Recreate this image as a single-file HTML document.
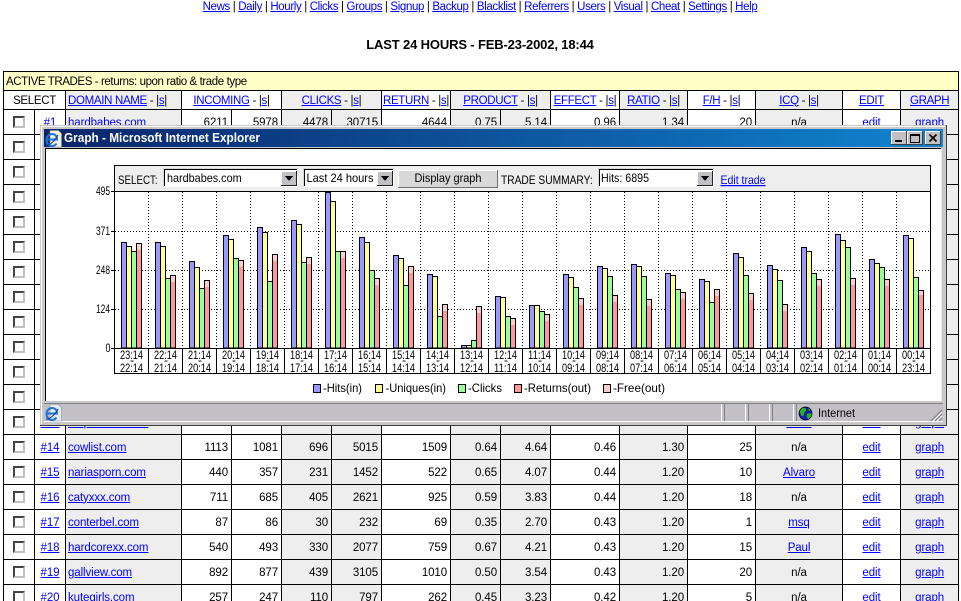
<!DOCTYPE html>
<html><head><meta charset="utf-8"><title>Stats</title>
<style>
html,body{margin:0;padding:0;background:#fff;width:961px;height:601px;overflow:hidden}
body{position:relative;font:11.5px "Liberation Sans",Arial,sans-serif;color:#000}
a{color:#00f;text-decoration:underline}
#nav{position:absolute;left:0;top:1px;width:960px;text-align:center;line-height:13px;letter-spacing:-.36px}
#ttl{position:absolute;left:0;top:37px;width:960px;text-align:center;font-weight:bold;font-size:13px;line-height:15px;letter-spacing:-.15px}
table{position:absolute;left:3px;top:71px;border-collapse:collapse;table-layout:fixed;width:956px}
td{border:1px solid #000;padding:2px 3px 0 0;height:24px;line-height:13px;white-space:nowrap;overflow:hidden;text-align:right;box-sizing:border-box;letter-spacing:-.1px}
tr.y td{background:#ffffc8;text-align:left;padding:2px 0 0 2px;height:19px;letter-spacing:-.4px}
tr.h td{height:19px;text-align:center;padding:2px 0 0;background:#fff;letter-spacing:-.32px}
tr.h td.g{background:#eee}
tr.h td.l{text-align:left;padding-left:2px}
tr.d td:nth-child(1),tr.d td:nth-child(2){text-align:center;padding:2px 0 0}
tr.d td:nth-child(1){padding:0}
tr.d td:nth-child(3){text-align:left;padding:2px 0 0 2px}
tr.d td:nth-child(3),tr.d td:nth-child(6),tr.d td:nth-child(7),tr.d td:nth-child(9),tr.d td:nth-child(10),tr.d td:nth-child(12),tr.d td:nth-child(14),tr.d td:nth-child(16){background:#eee}
tr.d td:nth-child(14),tr.d td:nth-child(15),tr.d td:nth-child(16){text-align:center;padding:2px 0 0}
tr.d td{height:25px}
i{display:block;width:12px;height:12px;margin:0 0 0 9px;box-sizing:border-box;background:#fff;border:2px solid;border-color:#444 #c0c0c0 #c0c0c0 #444}
#w{position:absolute;left:0;top:0}
#w text{font-family:"Liberation Sans",Arial,sans-serif;font-size:12px;fill:#000}
</style></head><body>
<div id="nav"><a href="#">News</a> | <a href="#">Daily</a> | <a href="#">Hourly</a> | <a href="#">Clicks</a> | <a href="#">Groups</a> | <a href="#">Signup</a> | <a href="#">Backup</a> | <a href="#">Blacklist</a> | <a href="#">Referrers</a> | <a href="#">Users</a> | <a href="#">Visual</a> | <a href="#">Cheat</a> | <a href="#">Settings</a> | <a href="#">Help</a></div>
<div id="ttl">LAST 24 HOURS - FEB-23-2002, 18:44</div>
<table>
<colgroup><col style="width:31px"><col style="width:31px"><col style="width:116px"><col style="width:50px"><col style="width:50px"><col style="width:50px"><col style="width:50px"><col style="width:69px"><col style="width:50px"><col style="width:50px"><col style="width:69px"><col style="width:68px"><col style="width:68px"><col style="width:87px"><col style="width:58px"><col style="width:58px"></colgroup>
<tr class="y"><td colspan="16">ACTIVE TRADES - returns: upon ratio &amp; trade type</td></tr>
<tr class="h"><td colspan="2">SELECT</td><td class="g l"><a href="#">DOMAIN NAME</a> - |<a href="#">s</a>|</td><td colspan="2"><a href="#">INCOMING</a> - |<a href="#">s</a>|</td><td colspan="2" class="g"><a href="#">CLICKS</a> - |<a href="#">s</a>|</td><td><a href="#">RETURN</a> - |<a href="#">s</a>|</td><td colspan="2" class="g"><a href="#">PRODUCT</a> - |<a href="#">s</a>|</td><td><a href="#">EFFECT</a> - |<a href="#">s</a>|</td><td class="g"><a href="#">RATIO</a> - |<a href="#">s</a>|</td><td><a href="#">F/H</a> - |<a href="#">s</a>|</td><td class="g"><a href="#">ICQ</a> - |<a href="#">s</a>|</td><td><a href="#">EDIT</a></td><td class="g"><a href="#">GRAPH</a></td></tr>
<tr class="d"><td><i></i></td><td><a href="#">#1</a></td><td><a href="#">hardbabes.com</a></td><td>6211</td><td>5978</td><td>4478</td><td>30715</td><td>4644</td><td>0.75</td><td>5.14</td><td>0.96</td><td>1.34</td><td>20</td><td>n/a</td><td><a href="#">edit</a></td><td><a href="#">graph</a></td></tr>
<tr class="d"><td><i></i></td><td></td><td></td><td></td><td></td><td></td><td></td><td></td><td></td><td></td><td></td><td></td><td></td><td></td><td></td><td></td></tr>
<tr class="d"><td><i></i></td><td></td><td></td><td></td><td></td><td></td><td></td><td></td><td></td><td></td><td></td><td></td><td></td><td></td><td></td><td></td></tr>
<tr class="d"><td><i></i></td><td></td><td></td><td></td><td></td><td></td><td></td><td></td><td></td><td></td><td></td><td></td><td></td><td></td><td></td><td></td></tr>
<tr class="d"><td><i></i></td><td></td><td></td><td></td><td></td><td></td><td></td><td></td><td></td><td></td><td></td><td></td><td></td><td></td><td></td><td></td></tr>
<tr class="d"><td><i></i></td><td></td><td></td><td></td><td></td><td></td><td></td><td></td><td></td><td></td><td></td><td></td><td></td><td></td><td></td><td></td></tr>
<tr class="d"><td><i></i></td><td></td><td></td><td></td><td></td><td></td><td></td><td></td><td></td><td></td><td></td><td></td><td></td><td></td><td></td><td></td></tr>
<tr class="d"><td><i></i></td><td></td><td></td><td></td><td></td><td></td><td></td><td></td><td></td><td></td><td></td><td></td><td></td><td></td><td></td><td></td></tr>
<tr class="d"><td><i></i></td><td></td><td></td><td></td><td></td><td></td><td></td><td></td><td></td><td></td><td></td><td></td><td></td><td></td><td></td><td></td></tr>
<tr class="d"><td><i></i></td><td></td><td></td><td></td><td></td><td></td><td></td><td></td><td></td><td></td><td></td><td></td><td></td><td></td><td></td><td></td></tr>
<tr class="d"><td><i></i></td><td></td><td></td><td></td><td></td><td></td><td></td><td></td><td></td><td></td><td></td><td></td><td></td><td></td><td></td><td></td></tr>
<tr class="d"><td><i></i></td><td></td><td></td><td></td><td></td><td></td><td></td><td></td><td></td><td></td><td></td><td></td><td></td><td></td><td></td><td></td></tr>
<tr class="d"><td><i></i></td><td><a href="#">#13</a></td><td><a href="#">hotpornsite.com</a></td><td>612</td><td>598</td><td>371</td><td>2410</td><td>803</td><td>0.62</td><td>4.02</td><td>0.47</td><td>1.30</td><td>12</td><td><a href="#">Mark</a></td><td><a href="#">edit</a></td><td><a href="#">graph</a></td></tr>
<tr class="d"><td><i></i></td><td><a href="#">#14</a></td><td><a href="#">cowlist.com</a></td><td>1113</td><td>1081</td><td>696</td><td>5015</td><td>1509</td><td>0.64</td><td>4.64</td><td>0.46</td><td>1.30</td><td>25</td><td>n/a</td><td><a href="#">edit</a></td><td><a href="#">graph</a></td></tr>
<tr class="d"><td><i></i></td><td><a href="#">#15</a></td><td><a href="#">nariasporn.com</a></td><td>440</td><td>357</td><td>231</td><td>1452</td><td>522</td><td>0.65</td><td>4.07</td><td>0.44</td><td>1.20</td><td>10</td><td><a href="#">Alvaro</a></td><td><a href="#">edit</a></td><td><a href="#">graph</a></td></tr>
<tr class="d"><td><i></i></td><td><a href="#">#16</a></td><td><a href="#">catyxxx.com</a></td><td>711</td><td>685</td><td>405</td><td>2621</td><td>925</td><td>0.59</td><td>3.83</td><td>0.44</td><td>1.20</td><td>18</td><td>n/a</td><td><a href="#">edit</a></td><td><a href="#">graph</a></td></tr>
<tr class="d"><td><i></i></td><td><a href="#">#17</a></td><td><a href="#">conterbel.com</a></td><td>87</td><td>86</td><td>30</td><td>232</td><td>69</td><td>0.35</td><td>2.70</td><td>0.43</td><td>1.20</td><td>1</td><td><a href="#">msq</a></td><td><a href="#">edit</a></td><td><a href="#">graph</a></td></tr>
<tr class="d"><td><i></i></td><td><a href="#">#18</a></td><td><a href="#">hardcorexx.com</a></td><td>540</td><td>493</td><td>330</td><td>2077</td><td>759</td><td>0.67</td><td>4.21</td><td>0.43</td><td>1.20</td><td>15</td><td><a href="#">Paul</a></td><td><a href="#">edit</a></td><td><a href="#">graph</a></td></tr>
<tr class="d"><td><i></i></td><td><a href="#">#19</a></td><td><a href="#">gallview.com</a></td><td>892</td><td>877</td><td>439</td><td>3105</td><td>1010</td><td>0.50</td><td>3.54</td><td>0.43</td><td>1.20</td><td>20</td><td>n/a</td><td><a href="#">edit</a></td><td><a href="#">graph</a></td></tr>
<tr class="d"><td><i></i></td><td><a href="#">#20</a></td><td><a href="#">kutegirls.com</a></td><td>257</td><td>247</td><td>110</td><td>797</td><td>262</td><td>0.45</td><td>3.23</td><td>0.42</td><td>1.20</td><td>5</td><td>n/a</td><td><a href="#">edit</a></td><td><a href="#">graph</a></td></tr>
</table>
<svg id="w" width="961" height="601" viewBox="0 0 961 601" xmlns="http://www.w3.org/2000/svg">
<defs><linearGradient id="tg" x1="0" x2="1" y1="0" y2="0"><stop offset="0" stop-color="#0a246a"/><stop offset="1" stop-color="#1084d0"/></linearGradient></defs>
<g shape-rendering="crispEdges">
<rect x="40" y="125" width="907" height="301" fill="#404040"/>
<rect x="40" y="125" width="906" height="300" fill="#c8c8c8"/>
<rect x="41" y="126" width="904" height="298" fill="#fff"/>
<rect x="42" y="127" width="903" height="297" fill="#c8c8c8"/>
<rect x="44" y="129" width="899" height="18" fill="url(#tg)"/>
<rect x="45" y="148" width="896" height="253" fill="#000"/>
<rect x="46" y="149" width="895" height="252" fill="#fff"/>
<rect x="941" y="149" width="1" height="252" fill="#e8e8e8"/>
<rect x="44" y="403" width="899" height="19" fill="#c3c0c5"/>
<rect x="44" y="403" width="899" height="1" fill="#808080"/>
<rect x="44" y="421" width="899" height="1" fill="#fff"/>
<path fill="#fff" d="M721 404h1v17h-1zM745 404h1v17h-1zM769 404h1v17h-1zM793 404h1v17h-1z"/>
<path fill="#808080" d="M724 404h1v17h-1zM748 404h1v17h-1zM772 404h1v17h-1zM796 404h1v17h-1z"/>
<rect x="891" y="131" width="16" height="14" fill="#404040"/><rect x="891" y="131" width="15" height="13" fill="#fff"/><rect x="892" y="132" width="14" height="12" fill="#c3c0c5"/>
<rect x="895" y="140" width="7" height="2" fill="#000"/>
<rect x="907" y="131" width="16" height="14" fill="#404040"/><rect x="907" y="131" width="15" height="13" fill="#fff"/><rect x="908" y="132" width="14" height="12" fill="#c3c0c5"/>
<path fill="none" stroke="#000" d="M910.5 134.5h9v8h-9z"/><rect x="910" y="134" width="10" height="2" fill="#000"/>
<rect x="925" y="131" width="16" height="14" fill="#404040"/><rect x="925" y="131" width="15" height="13" fill="#fff"/><rect x="926" y="132" width="14" height="12" fill="#c3c0c5"/>
</g>
<path d="M929.5 134.5l7 7M936.5 134.5l-7 7" stroke="#000" stroke-width="1.6" fill="none"/>
<text x="64" y="142" font-weight="bold" style="font-size:12.5px;fill:#fff" textLength="196" lengthAdjust="spacingAndGlyphs">Graph - Microsoft Internet Explorer</text>
<path d="M50 130.5h8.5l3 3v13.5h-11.5z" fill="#f2efdf" stroke="#888" stroke-width=".6"/>
<path d="M47.5 139.5h9.5c0-3.500-2-5.500-5-5.500s-5.500 2.500-5.500 6 2.500 6 5.500 6c2 0 3.500-1 4.500-2.500" fill="none" stroke="#1c74d8" stroke-width="2"/><path d="M46 145c3 1 9-4 12-10" stroke="#0a3a9a" fill="none"/>
<path d="M50 404.5h8.5l3 3v13.5h-11.5z" fill="#e4e8f0" stroke="#8a94a8" stroke-width=".6"/>
<path d="M47.5 413.5h9.5c0-3.500-2-5.500-5-5.500s-5.500 2.500-5.500 6 2.500 6 5.500 6c2 0 3.500-1 4.500-2.500" fill="none" stroke="#1c74d8" stroke-width="2"/><path d="M46 419c3 1 9-4 12-10" stroke="#0a3a9a" fill="none"/>
<circle cx="805.5" cy="413.5" r="6.5" fill="#1020a8"/><path d="M801 408c3-1 5 0 5 2s-2 2-2 4-2 3-3 1-2-6 0-7zM807 414c2-1 4-1 5 0 0 2-2 5-4 5-1-2-2-3-1-5zM808 408l3 2-2 1z" fill="#28b028"/><circle cx="805.5" cy="413.5" r="6.5" fill="none" stroke="#000" stroke-width=".7"/>
<text x="818" y="417" textLength="37" lengthAdjust="spacingAndGlyphs">Internet</text>
<path d="M931 421l11-11M935 421l7-7M939 421l3-3" stroke="#808080" stroke-width="1.2" fill="none"/><path d="M933 421l9-9M937 421l5-5" stroke="#fff" fill="none"/>
<g shape-rendering="crispEdges">
<rect x="114" y="165" width="817" height="27" fill="#000"/><rect x="115" y="166" width="815" height="25" fill="#eee"/>
<rect x="163" y="168" width="135" height="19" fill="#fff"/><path d="M163.5 187V168.5H298" fill="none" stroke="#d8d8d8"/><path d="M164.5 186V169.5H297" fill="none" stroke="#000"/>
<rect x="281" y="171" width="16" height="15" fill="#222"/><rect x="281" y="171" width="15" height="14" fill="#fff"/><rect x="282" y="172" width="14" height="13" fill="#c3c0c5"/>
<rect x="303" y="168" width="91" height="19" fill="#fff"/><path d="M303.5 187V168.5H394" fill="none" stroke="#d8d8d8"/><path d="M304.5 186V169.5H393" fill="none" stroke="#000"/>
<rect x="377" y="171" width="16" height="15" fill="#222"/><rect x="377" y="171" width="15" height="14" fill="#fff"/><rect x="378" y="172" width="14" height="13" fill="#c3c0c5"/>
<rect x="598" y="168" width="116" height="19" fill="#fff"/><path d="M598.5 187V168.5H714" fill="none" stroke="#d8d8d8"/><path d="M599.5 186V169.5H713" fill="none" stroke="#000"/>
<rect x="697" y="171" width="16" height="15" fill="#222"/><rect x="697" y="171" width="15" height="14" fill="#fff"/><rect x="698" y="172" width="14" height="13" fill="#c3c0c5"/>
<path d="M285 176h8l-4 5zM381 176h8l-4 5zM701 176h8l-4 5z" fill="#000"/>
<rect x="398" y="170" width="100" height="18" fill="#707070"/><rect x="398" y="170" width="99" height="17" fill="#fff"/><rect x="399" y="171" width="98" height="16" fill="#d8d8d8"/>
</g>
<text x="118" y="184" textLength="39.6" lengthAdjust="spacingAndGlyphs">SELECT:</text>
<text x="167" y="182" textLength="74.6" lengthAdjust="spacingAndGlyphs">hardbabes.com</text>
<text x="306.5" y="182" textLength="67" lengthAdjust="spacingAndGlyphs">Last 24 hours</text>
<text x="414.5" y="182" textLength="67" lengthAdjust="spacingAndGlyphs">Display graph</text>
<text x="501" y="184" textLength="91.7" lengthAdjust="spacingAndGlyphs">TRADE SUMMARY:</text>
<text x="601" y="182" textLength="48" lengthAdjust="spacingAndGlyphs">Hits: 6895</text>
<text x="720.5" y="184" style="fill:#00f" text-decoration="underline" textLength="45" lengthAdjust="spacingAndGlyphs">Edit trade</text>
<g shape-rendering="crispEdges">
<path d="M115 231.5H930M115 270.5H930M115 309.5H930" stroke="#000" stroke-dasharray="1 2" fill="none"/>
<path d="M148.5 192V348M182.5 192V348M216.5 192V348M250.5 192V348M284.5 192V348M318.5 192V348M352.5 192V348M386.5 192V348M420.5 192V348M454.5 192V348M488.5 192V348M522.5 192V348M556.5 192V348M590.5 192V348M624.5 192V348M658.5 192V348M692.5 192V348M726.5 192V348M760.5 192V348M794.5 192V348M828.5 192V348M862.5 192V348M896.5 192V348" stroke="#000" stroke-dasharray="1 2" fill="none"/>
<path d="M114.5 191V374M930.5 191V374M114 348.5H931M114 373.5H931" stroke="#000" fill="none"/>
<path d="M148.5 348V374M182.5 348V374M216.5 348V374M250.5 348V374M284.5 348V374M318.5 348V374M352.5 348V374M386.5 348V374M420.5 348V374M454.5 348V374M488.5 348V374M522.5 348V374M556.5 348V374M590.5 348V374M624.5 348V374M658.5 348V374M692.5 348V374M726.5 348V374M760.5 348V374M794.5 348V374M828.5 348V374M862.5 348V374M896.5 348V374" stroke="#000" fill="none"/>
<path d="M111 191.5h3M111 231.5h3M111 270.5h3M111 309.5h3M111 348.5h3" stroke="#000" fill="none"/>
<path fill="#9999ff" stroke="#000" d="M121.5 348V242.5h5V348zM155.5 348V242.5h5V348zM189.5 348V261.5h5V348zM223.5 348V235.5h5V348zM257.5 348V227.5h5V348zM291.5 348V220.5h5V348zM325.5 348V192.5h5V348zM359.5 348V237.5h5V348zM393.5 348V255.5h5V348zM427.5 348V274.5h5V348zM461.5 348V345.5h5V348zM495.5 348V296.5h5V348zM529.5 348V305.5h5V348zM563.5 348V274.5h5V348zM597.5 348V266.5h5V348zM631.5 348V264.5h5V348zM665.5 348V273.5h5V348zM699.5 348V279.5h5V348zM733.5 348V253.5h5V348zM767.5 348V265.5h5V348zM801.5 348V247.5h5V348zM835.5 348V234.5h5V348zM869.5 348V259.5h5V348zM903.5 348V235.5h5V348z"/>
<path fill="#ffff99" stroke="#000" d="M126.5 348V246.5h5V348zM160.5 348V246.5h5V348zM194.5 348V267.5h5V348zM228.5 348V239.5h5V348zM262.5 348V232.5h5V348zM296.5 348V224.5h5V348zM330.5 348V201.5h5V348zM364.5 348V242.5h5V348zM398.5 348V258.5h5V348zM432.5 348V276.5h5V348zM466.5 348V345.5h5V348zM500.5 348V297.5h5V348zM534.5 348V305.5h5V348zM568.5 348V277.5h5V348zM602.5 348V268.5h5V348zM636.5 348V266.5h5V348zM670.5 348V275.5h5V348zM704.5 348V281.5h5V348zM738.5 348V257.5h5V348zM772.5 348V269.5h5V348zM806.5 348V251.5h5V348zM840.5 348V240.5h5V348zM874.5 348V263.5h5V348zM908.5 348V238.5h5V348z"/>
<path fill="#99ff99" stroke="#000" d="M131.5 348V251.5h5V348zM165.5 348V278.5h5V348zM199.5 348V288.5h5V348zM233.5 348V258.5h5V348zM267.5 348V281.5h5V348zM301.5 348V262.5h5V348zM335.5 348V251.5h5V348zM369.5 348V270.5h5V348zM403.5 348V285.5h5V348zM437.5 348V316.5h5V348zM471.5 348V340.5h5V348zM505.5 348V316.5h5V348zM539.5 348V311.5h5V348zM573.5 348V287.5h5V348zM607.5 348V276.5h5V348zM641.5 348V276.5h5V348zM675.5 348V289.5h5V348zM709.5 348V302.5h5V348zM743.5 348V275.5h5V348zM777.5 348V280.5h5V348zM811.5 348V273.5h5V348zM845.5 348V247.5h5V348zM879.5 348V267.5h5V348zM913.5 348V277.5h5V348z"/>
<path fill="#ff9999" stroke="#000" d="M136.5 348V243.5h5V348zM170.5 348V275.5h5V348zM204.5 348V280.5h5V348zM238.5 348V260.5h5V348zM272.5 348V254.5h5V348zM306.5 348V257.5h5V348zM340.5 348V251.5h5V348zM374.5 348V278.5h5V348zM408.5 348V266.5h5V348zM442.5 348V304.5h5V348zM476.5 348V306.5h5V348zM510.5 348V318.5h5V348zM544.5 348V314.5h5V348zM578.5 348V298.5h5V348zM612.5 348V295.5h5V348zM646.5 348V299.5h5V348zM680.5 348V292.5h5V348zM714.5 348V289.5h5V348zM748.5 348V293.5h5V348zM782.5 348V304.5h5V348zM816.5 348V279.5h5V348zM850.5 348V278.5h5V348zM884.5 348V279.5h5V348zM918.5 348V290.5h5V348z"/>
<path fill="#ffcccc" d="M137 244h4v6h-4zM171 276h4v6h-4zM205 281h4v6h-4zM239 261h4v6h-4zM273 255h4v6h-4zM307 258h4v6h-4zM341 252h4v6h-4zM375 279h4v6h-4zM409 267h4v6h-4zM443 305h4v6h-4zM477 307h4v6h-4zM511 319h4v6h-4zM545 315h4v6h-4zM579 299h4v6h-4zM613 296h4v6h-4zM647 300h4v6h-4zM681 293h4v6h-4zM715 290h4v6h-4zM749 294h4v6h-4zM783 305h4v6h-4zM817 280h4v6h-4zM851 279h4v6h-4zM885 280h4v6h-4zM919 291h4v4h-4z"/>
<path d="M313.5 384.5h7v8h-7z" fill="#9999ff" stroke="#000"/><path d="M375.5 384.5h7v8h-7z" fill="#ffff99" stroke="#000"/><path d="M458.5 384.5h7v8h-7z" fill="#99ff99" stroke="#000"/><path d="M514.5 384.5h7v8h-7z" fill="#ff9999" stroke="#000"/><path d="M603.5 384.5h7v8h-7z" fill="#ffcccc" stroke="#000"/>
</g>
<text x="323" y="392" textLength="39" lengthAdjust="spacingAndGlyphs">-Hits(in)</text>
<text x="385.5" y="392" textLength="60.5" lengthAdjust="spacingAndGlyphs">-Uniques(in)</text>
<text x="468" y="392" textLength="34" lengthAdjust="spacingAndGlyphs">-Clicks</text>
<text x="524" y="392" textLength="67" lengthAdjust="spacingAndGlyphs">-Returns(out)</text>
<text x="613" y="392" textLength="52" lengthAdjust="spacingAndGlyphs">-Free(out)</text>
<text x="96" y="195" textLength="14" lengthAdjust="spacingAndGlyphs">495</text>
<text x="96" y="235" textLength="14" lengthAdjust="spacingAndGlyphs">371</text>
<text x="96" y="274" textLength="14" lengthAdjust="spacingAndGlyphs">248</text>
<text x="96" y="313" textLength="14" lengthAdjust="spacingAndGlyphs">124</text>
<text x="105.5" y="352" textLength="5" lengthAdjust="spacingAndGlyphs">0</text>
<g>
<text x="120" y="359" textLength="23" lengthAdjust="spacingAndGlyphs">23:14</text><text x="120" y="372" textLength="23" lengthAdjust="spacingAndGlyphs">22:14</text>
<text x="154" y="359" textLength="23" lengthAdjust="spacingAndGlyphs">22:14</text><text x="154" y="372" textLength="23" lengthAdjust="spacingAndGlyphs">21:14</text>
<text x="188" y="359" textLength="23" lengthAdjust="spacingAndGlyphs">21:14</text><text x="188" y="372" textLength="23" lengthAdjust="spacingAndGlyphs">20:14</text>
<text x="222" y="359" textLength="23" lengthAdjust="spacingAndGlyphs">20:14</text><text x="222" y="372" textLength="23" lengthAdjust="spacingAndGlyphs">19:14</text>
<text x="256" y="359" textLength="23" lengthAdjust="spacingAndGlyphs">19:14</text><text x="256" y="372" textLength="23" lengthAdjust="spacingAndGlyphs">18:14</text>
<text x="290" y="359" textLength="23" lengthAdjust="spacingAndGlyphs">18:14</text><text x="290" y="372" textLength="23" lengthAdjust="spacingAndGlyphs">17:14</text>
<text x="324" y="359" textLength="23" lengthAdjust="spacingAndGlyphs">17:14</text><text x="324" y="372" textLength="23" lengthAdjust="spacingAndGlyphs">16:14</text>
<text x="358" y="359" textLength="23" lengthAdjust="spacingAndGlyphs">16:14</text><text x="358" y="372" textLength="23" lengthAdjust="spacingAndGlyphs">15:14</text>
<text x="392" y="359" textLength="23" lengthAdjust="spacingAndGlyphs">15:14</text><text x="392" y="372" textLength="23" lengthAdjust="spacingAndGlyphs">14:14</text>
<text x="426" y="359" textLength="23" lengthAdjust="spacingAndGlyphs">14:14</text><text x="426" y="372" textLength="23" lengthAdjust="spacingAndGlyphs">13:14</text>
<text x="460" y="359" textLength="23" lengthAdjust="spacingAndGlyphs">13:14</text><text x="460" y="372" textLength="23" lengthAdjust="spacingAndGlyphs">12:14</text>
<text x="494" y="359" textLength="23" lengthAdjust="spacingAndGlyphs">12:14</text><text x="494" y="372" textLength="23" lengthAdjust="spacingAndGlyphs">11:14</text>
<text x="528" y="359" textLength="23" lengthAdjust="spacingAndGlyphs">11:14</text><text x="528" y="372" textLength="23" lengthAdjust="spacingAndGlyphs">10:14</text>
<text x="562" y="359" textLength="23" lengthAdjust="spacingAndGlyphs">10:14</text><text x="562" y="372" textLength="23" lengthAdjust="spacingAndGlyphs">09:14</text>
<text x="596" y="359" textLength="23" lengthAdjust="spacingAndGlyphs">09:14</text><text x="596" y="372" textLength="23" lengthAdjust="spacingAndGlyphs">08:14</text>
<text x="630" y="359" textLength="23" lengthAdjust="spacingAndGlyphs">08:14</text><text x="630" y="372" textLength="23" lengthAdjust="spacingAndGlyphs">07:14</text>
<text x="664" y="359" textLength="23" lengthAdjust="spacingAndGlyphs">07:14</text><text x="664" y="372" textLength="23" lengthAdjust="spacingAndGlyphs">06:14</text>
<text x="698" y="359" textLength="23" lengthAdjust="spacingAndGlyphs">06:14</text><text x="698" y="372" textLength="23" lengthAdjust="spacingAndGlyphs">05:14</text>
<text x="732" y="359" textLength="23" lengthAdjust="spacingAndGlyphs">05:14</text><text x="732" y="372" textLength="23" lengthAdjust="spacingAndGlyphs">04:14</text>
<text x="766" y="359" textLength="23" lengthAdjust="spacingAndGlyphs">04:14</text><text x="766" y="372" textLength="23" lengthAdjust="spacingAndGlyphs">03:14</text>
<text x="800" y="359" textLength="23" lengthAdjust="spacingAndGlyphs">03:14</text><text x="800" y="372" textLength="23" lengthAdjust="spacingAndGlyphs">02:14</text>
<text x="834" y="359" textLength="23" lengthAdjust="spacingAndGlyphs">02:14</text><text x="834" y="372" textLength="23" lengthAdjust="spacingAndGlyphs">01:14</text>
<text x="868" y="359" textLength="23" lengthAdjust="spacingAndGlyphs">01:14</text><text x="868" y="372" textLength="23" lengthAdjust="spacingAndGlyphs">00:14</text>
<text x="902" y="359" textLength="23" lengthAdjust="spacingAndGlyphs">00:14</text><text x="902" y="372" textLength="23" lengthAdjust="spacingAndGlyphs">23:14</text>
<text y="364" x="130 164 198 232 266 300 334 368 402 436 470 504 538 572 606 640 674 708 742 776 810 844 878 912">------------------------</text>
</g>
</svg>
</body></html>
